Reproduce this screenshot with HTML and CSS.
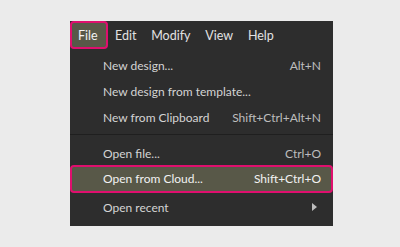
FILE: index.html
```html
<!DOCTYPE html>
<html lang="en">
<head>
  <meta charset="UTF-8" />
  <title>File menu</title>
  <link rel="stylesheet" href="styles.css">
</head>
<body>
  <div class="panel">
    <div class="menubar">
      <span class="menu-title active">File</span>
      <span class="menu-title">Edit</span>
      <span class="menu-title">Modify</span>
      <span class="menu-title">View</span>
      <span class="menu-title">Help</span>
    </div>

    <ul class="dropdown">
      <li class="item"><span>New design...</span><span class="key">Alt+N</span></li>
      <li class="item"><span>New design from template...</span></li>
      <li class="item"><span>New from Clipboard</span><span class="key">Shift+Ctrl+Alt+N</span></li>
      <li class="separator"></li>
      <li class="item"><span>Open file...</span><span class="key">Ctrl+O</span></li>
      <li class="item selected"><span>Open from Cloud...</span><span class="key">Shift+Ctrl+O</span></li>
      <li class="item"><span>Open recent</span><span class="arrow"></span></li>
    </ul>
  </div>
</body>
</html>
```

FILE: styles.css
```css
body {
  margin: 0;
  background-color: #ebebeb;
  font-family: Lato, "Open Sans", sans-serif;
  font-size: 12px;
}
.panel {
  width: 263px;
  height: 205px;
  margin: 21px 0 0 70px;
  background-color: #2d2d2d;
}
.menubar {
  display: flex;
  height: 28px;
  font-size: 12.5px;
}
.menu-title {
  display: flex;
  align-items: center;
  padding: 0 5.4px;
  color: #e2e2e2;
  border: 2px solid transparent;
  border-radius: 4px;
}
.menu-title.active {
  padding: 0 8px 0 6px;
  background-color: #585848;
  border-color: #df0f6e;
  color: #f2f2f2;
}
.dropdown {
  list-style: none;
  margin: 0;
  padding: 3px 0 0;
}
.item {
  display: flex;
  justify-content: space-between;
  align-items: center;
  height: 26px;
  padding: 0 12px 0 33px;
  color: #d4d4d4;
}
.item .key {
  color: #bdbdbd;
}
.item.selected {
  box-sizing: border-box;
  height: 28px;
  margin: -1px 0 1px;
  padding: 0 10px 1px 31px;
  background-color: #585848;
  border: 2px solid #df0f6e;
  border-radius: 4px;
  color: #f2f2f2;
}
.item.selected .key {
  color: #f2f2f2;
}
.separator {
  height: 1px;
  margin: 4px 0 5px;
  background-color: #1f1f1f;
}
.arrow {
  width: 0;
  height: 0;
  margin-right: 4px;
  border-top: 4px solid transparent;
  border-bottom: 4px solid transparent;
  border-left: 5px solid #bdbdbd;
}
```
